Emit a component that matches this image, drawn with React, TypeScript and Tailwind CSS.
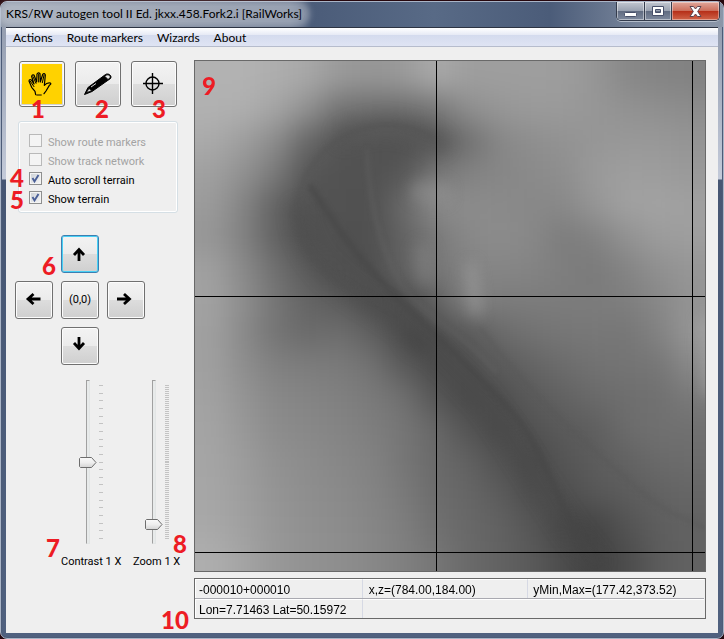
import { useState, type ReactNode } from "react";
import clsx from "clsx";

/* Terrain heights, one grey level per map cell, row by row from the north. */
const HEIGHTS: number[][] = [
  [178, 178, 174, 168, 154, 150, 154, 170, 158, 158, 158, 157, 150, 136, 132, 130],
  [177, 175, 165, 145, 115, 110, 110, 118, 142, 150, 154, 154, 150, 146, 143, 140],
  [170, 158, 140, 103, 84, 82, 80, 86, 110, 134, 142, 146, 150, 152, 152, 148],
  [160, 145, 122, 86, 82, 82, 86, 118, 130, 134, 138, 142, 154, 158, 157, 153],
  [155, 132, 98, 82, 82, 80, 105, 138, 140, 138, 136, 136, 150, 161, 162, 160],
  [150, 130, 98, 80, 80, 80, 98, 120, 136, 140, 136, 124, 130, 146, 156, 158],
  [160, 138, 112, 90, 80, 78, 98, 118, 130, 134, 132, 126, 122, 132, 144, 150],
  [162, 142, 118, 100, 92, 78, 76, 95, 130, 124, 124, 124, 124, 126, 136, 148],
  [160, 138, 116, 106, 110, 96, 74, 76, 88, 106, 114, 118, 120, 118, 130, 150],
  [160, 142, 128, 124, 122, 114, 90, 74, 78, 90, 100, 108, 114, 116, 118, 138],
  [162, 148, 136, 132, 128, 122, 112, 86, 72, 78, 90, 98, 106, 110, 112, 122],
  [164, 152, 140, 136, 132, 126, 118, 104, 84, 72, 82, 90, 94, 108, 112, 112],
  [165, 156, 145, 140, 135, 130, 118, 106, 98, 82, 72, 85, 92, 98, 106, 108],
  [166, 158, 148, 142, 138, 132, 122, 108, 102, 92, 76, 78, 88, 92, 98, 102],
  [168, 160, 150, 144, 140, 134, 126, 112, 104, 98, 86, 70, 68, 84, 94, 98],
  [174, 164, 152, 146, 142, 136, 128, 118, 106, 98, 90, 76, 66, 76, 92, 98],
];
const CELL = 32;

function Terrain() {
  const cells: ReactNode[] = [];
  for (let r = -2; r < 18; r++) {
    for (let c = -2; c < 18; c++) {
      const v = HEIGHTS[Math.min(15, Math.max(0, r))][Math.min(15, Math.max(0, c))];
      cells.push(
        <rect key={`${r}/${c}`} x={c * CELL} y={r * CELL} width={CELL + 1} height={CELL + 1} fill={`rgb(${v},${v},${v})`} />,
      );
    }
  }
  return (
    <svg viewBox="0 0 510 510" className="block h-auto w-full" role="img" aria-label="Terrain map">
      <defs>
        <filter id="slope" filterUnits="userSpaceOnUse" x="-64" y="-64" width="640" height="640" colorInterpolationFilters="sRGB">
          <feGaussianBlur stdDeviation="14" />
        </filter>
        <filter id="edge" filterUnits="userSpaceOnUse" x="-40" y="-40" width="600" height="600" colorInterpolationFilters="sRGB">
          <feGaussianBlur stdDeviation="2" />
        </filter>
        <filter id="bank" filterUnits="userSpaceOnUse" x="-40" y="-40" width="600" height="600" colorInterpolationFilters="sRGB">
          <feGaussianBlur stdDeviation="7" />
        </filter>
      </defs>
      <g filter="url(#slope)">{cells}</g>
      <g filter="url(#bank)" fill="none" strokeLinecap="round">
        <path d="M150 74 C190 58 220 66 244 82" stroke="#555" strokeWidth="20" opacity=".5" />
        <path d="M104 150 C106 195 140 222 180 245 S250 300 280 330 S350 440 400 500" stroke="#4a4a4a" strokeWidth="20" opacity=".3" />
        <path d="M276 206 L281 250" stroke="#a0a0a0" strokeWidth="10" opacity=".6" />
        <path d="M226 130 L245 132" stroke="#969696" strokeWidth="22" opacity=".4" />
        <path d="M228 190 L230 216" stroke="#888" strokeWidth="18" opacity=".4" />
        <path d="M510 262 L514 330" stroke="#b0b0b0" strokeWidth="12" opacity=".5" />
        <path d="M218 278 L226 284" stroke="#444" strokeWidth="18" opacity=".5" />
      </g>
      <g filter="url(#edge)" fill="none" strokeLinecap="round">
        <path d="M116 126 C138 160 155 188 190 224 C235 270 280 310 316 350 S362 450 400 500" stroke="#454545" strokeWidth="7" opacity=".5" />
        <path d="M238 76 C190 50 140 70 116 106 S100 180 126 204 S170 232 200 250" stroke="#505050" strokeWidth="5" opacity=".35" />
        <path d="M172 90 C174 150 190 210 220 240 S270 275 300 310" stroke="#666" strokeWidth="5" opacity=".3" />
        <path d="M286 268 C340 340 400 390 440 425 S490 455 508 466" stroke="#555" strokeWidth="4" opacity=".35" />
      </g>
      <path d="M241.500 0V510M497.500 0V510M0 235.500H510M0 491.500H510" stroke="#000" fill="none" shapeRendering="crispEdges" />
    </svg>
  );
}

const face =
  "grid place-items-center rounded-[3px] border bg-[linear-gradient(#f3f3f3,#ebebeb_49%,#dddddd_50%,#cfcfcf)]";
const plain = "border-[#707070] shadow-[inset_0_0_0_1px_#fcfcfc]";
const focused = "border-[#3c7fb1] shadow-[inset_0_0_0_1px_#48d0f5]";

function Mark({ n, className }: { n: number; className: string }) {
  return (
    <span
      className={clsx(
        "pointer-events-none absolute font-['Lato','Open_Sans',sans-serif] text-[24px] leading-[20px] font-black text-[#ed1c24]",
        className,
      )}
    >
      {n}
    </span>
  );
}

function Check({ label, initial = false, disabled = false }: { label: string; initial?: boolean; disabled?: boolean }) {
  const [on, setOn] = useState(initial);
  return (
    <label className={clsx("flex h-[19px] items-center gap-1.5", disabled ? "text-[#a3a3a3]" : "text-black")}>
      <span className="grid size-[13px] place-items-center">
        <input
          type="checkbox"
          checked={on}
          disabled={disabled}
          onChange={(e) => setOn(e.target.checked)}
          className="col-start-1 row-start-1 size-[13px] appearance-none border border-[#8e8f8f] bg-[linear-gradient(135deg,#cbd0d6,#f6f6f6)] shadow-[inset_0_0_0_1px_#f4f4f4] disabled:border-[#b9b9b9] disabled:bg-[#f4f4f4] disabled:bg-none"
        />
        {on && (
          <svg viewBox="0 0 13 13" className="pointer-events-none col-start-1 row-start-1 size-[13px]" aria-hidden="true">
            <path d="M3.500 6L5.500 9.500L9.500 3" fill="none" stroke="#4a5f97" strokeWidth="1.900" />
          </svg>
        )}
      </span>
      <span className="pt-1 leading-[13px]">{label}</span>
    </label>
  );
}

function Slider({ name, initial, ticks }: { name: string; initial: number; ticks: number }) {
  const [value, setValue] = useState(initial);
  return (
    <div className="flex gap-0.5">
      <div className="relative flex h-[164px] w-[19px] justify-center">
        <input
          type="range"
          aria-label={name}
          min={0}
          max={100}
          value={value}
          onChange={(e) => setValue(Number(e.target.value))}
          className="h-full w-[4px] appearance-none border border-[#e2e5e5] border-t-[#a0a0a0] border-l-[#a0a0a0] bg-[#e7eaea] [direction:rtl] [writing-mode:vertical-lr] [&::-webkit-slider-thumb]:h-[11px] [&::-webkit-slider-thumb]:w-[19px] [&::-webkit-slider-thumb]:appearance-none [&::-webkit-slider-thumb]:bg-transparent"
        />
        <svg
          viewBox="0 0 19 11"
          className="pointer-events-none absolute left-0 h-[11px] w-[19px]"
          style={{ bottom: `${(value / 100) * 153}px` }}
          aria-hidden="true"
        >
          <defs>
            <linearGradient id="thumb" x1="0" y1="0" x2="0" y2="1">
              <stop offset="0" stopColor="#fafafa" />
              <stop offset=".5" stopColor="#eeeeee" />
              <stop offset="1" stopColor="#d4d4d4" />
            </linearGradient>
          </defs>
          <path d="M2.500 .5H13.500L18 5.500L13.500 10.500H2.500L1.500 9.500V1.500Z" fill="url(#thumb)" stroke="#6d6d6d" />
        </svg>
      </div>
      <svg width="4" height="164" shapeRendering="crispEdges" aria-hidden="true">
        {Array.from({ length: ticks }, (_, i) => (
          <rect key={i} x="0" y={5 + Math.round((i * 153) / (ticks - 1))} width="4" height="1" fill="#c3c3c3" />
        ))}
      </svg>
    </div>
  );
}

const arrows = {
  up: "M6 14V2.500M1 8L6 2.500L11 8",
  down: "M6 -2V9.500M1 4L6 9.500L11 4",
  left: "M13.500 6H1M6.500 1L1 6L6.500 11",
  right: "M-2 6H10.500M5 1L10.500 6L5 11",
};

function Pan({ dir, active = false, className }: { dir: keyof typeof arrows; active?: boolean; className: string }) {
  return (
    <button type="button" aria-label={`Scroll ${dir}`} className={clsx(face, active ? focused : plain, "size-[38px]", className)}>
      <svg viewBox="0 0 14 14" className="size-[14px] overflow-visible" fill="none" stroke="#000" strokeWidth="2.800" aria-hidden="true">
        <path d={arrows[dir]} />
      </svg>
    </button>
  );
}

function WindowButtons() {
  const glass =
    "grid place-items-center border-r border-[#343c4d] bg-[linear-gradient(#c2c7d0,#9aa2b1_48%,#5f6a80_50%,#7f8a9e)] shadow-[inset_0_0_0_1px_rgba(255,255,255,0.45)]";
  return (
    <div className="mr-[3px] flex h-[19px] overflow-hidden rounded-b-[5px] border border-t-0 border-[#343c4d] shadow-[0_1px_0_#b4bdca]">
      <button type="button" aria-label="Minimize" className={clsx(glass, "w-[28px]")}>
        <svg width="13" height="5" className="mt-1.5" aria-hidden="true">
          <rect x=".5" y=".5" width="12" height="4" rx="1" fill="#fff" stroke="#48506a" />
        </svg>
      </button>
      <button type="button" aria-label="Maximize" className={clsx(glass, "w-[27px]")}>
        <svg width="12" height="10" aria-hidden="true">
          <path d="M.5 .5H11.500V9.500H.5ZM3.500 3.500V6.500H8.500V3.500Z" fillRule="evenodd" fill="#fff" stroke="#48506a" />
        </svg>
      </button>
      <button
        type="button"
        aria-label="Close"
        className="grid w-[47px] place-items-center bg-[linear-gradient(#e0a79b,#cc6f5c_48%,#b52d17_50%,#d0654a)] shadow-[inset_0_0_0_1px_rgba(255,255,255,0.4)]"
      >
        <svg width="13" height="11" aria-hidden="true">
          <path
            d="M1 .5H4.500L6.500 3L8.500 .5H12L8.700 5.500L12 10.500H8.500L6.500 8L4.500 10.500H1L4.300 5.500Z"
            fill="#fff"
            stroke="#5a4450"
          />
        </svg>
      </button>
    </div>
  );
}

function Hand() {
  return (
    <svg viewBox="40 40 72 72" className="size-6" fill="none" stroke="#000" strokeWidth="3.600" strokeLinejoin="round" strokeLinecap="round" aria-hidden="true">
      <path d="M63 108L61 98L51 86L43 67Q44 61 50 64L58 76L51 54Q52 47 58 49L66 70L67 46Q71 40 76 45L77 70L84 47Q89 42 92 49L89 80Q97 71 107 73Q111 76 104 80L94 97L88 105" />
      <path d="M47 68L58 84M55 54L64 74M72 47V70M88 50L83 72" strokeWidth="3" />
      <path d="M66 109H80" strokeWidth="3" />
    </svg>
  );
}

function Pencil() {
  return (
    <svg viewBox="0 0 30 24" className="h-6 w-[30px]" stroke="#000" strokeLinejoin="round" aria-hidden="true">
      <path d="M1.500 22.500L5 15.500L22.500 2.500C25 .8 29.500 3.500 27.500 6.500L9 19.500Z" fill="#000" />
      <path d="M3.500 20.500L6 16.500L8.500 18.800Z" fill="#e6e6e6" strokeWidth=".7" />
      <path d="M23 3.200C25.500 2 28 4 27 6L25 7.500L21.700 4.200Z" fill="#e8e8e8" strokeWidth=".9" />
      <path d="M8 15L13 11.500" stroke="#d8d8d8" strokeWidth="1" />
    </svg>
  );
}

function Target() {
  return (
    <svg viewBox="0 0 22 22" className="size-[22px]" fill="none" stroke="#000" strokeWidth="1.400" aria-hidden="true">
      <circle cx="9.500" cy="10.500" r="6.500" />
      <path d="M9.500 0V21M-1 10.500H20" />
    </svg>
  );
}

export default function App() {
  const cell = "flex h-[19px] items-center border-t border-l border-white px-[3px] pt-0.5 whitespace-nowrap";
  return (
    <div className="flex min-h-screen flex-col bg-[#26070d] font-['Liberation_Sans',Arial,sans-serif] text-[11px] text-black">
      <div className="mt-px flex flex-1 flex-col rounded-[7px] border border-[#a9b4c6] bg-[linear-gradient(#8c96a9,#c3cad9_177px,#465673_178px,#50617f)] px-[5px] pb-[5px] shadow-[inset_0_0_0_1px_#4c5b77]">
        <header className="-mx-[5px] flex h-[25px] items-start justify-between rounded-t-[6px] bg-[linear-gradient(90deg,#8d97a8,#7f8a9d_15%,#6b7890_40%,#4b5c79_43%,#586a86_60%,#4b5c79_76%,#77849a_88%,#8b96a8)]">
          <h1 className="mt-1 ml-0.5 rounded-full bg-white/30 px-[3px] font-['Lato','Open_Sans',sans-serif] text-[12px] leading-4 whitespace-nowrap shadow-[0_0_6px_5px_rgba(255,255,255,0.3)]">
            KRS/RW autogen tool II Ed. jkxx.458.Fork2.i [RailWorks]
          </h1>
          <WindowButtons />
        </header>

        <div className="flex flex-1 flex-col border-t border-[#2c3342] bg-[#efefef]">
          <nav className="flex h-[19px] items-center gap-3.5 border-b border-[#b6bccc] bg-[linear-gradient(#ffffff,#e6eaf5_38%,#d4dbee_40%,#dfe4f3)] px-[7px] pt-0.5 font-['Lato','Open_Sans',sans-serif] text-[12px] leading-4">
            {["Actions", "Route markers", "Wizards", "About"].map((item) => (
              <button key={item} type="button">
                {item}
              </button>
            ))}
          </nav>

          <main className="flex flex-1 items-start pr-3 pb-3.5">
            <aside className="w-[188px] shrink-0 pt-3.5 pl-[9px] font-['Roboto','Liberation_Sans',sans-serif]">
              <div className="relative ml-1 flex gap-2.5">
                <button type="button" aria-label="Scroll map" className={clsx(face, plain, "size-[46px]")}>
                  <span className="grid size-10 place-items-center bg-[#ffd200] pr-1">
                    <Hand />
                  </span>
                </button>
                <button type="button" aria-label="Draw" className={clsx(face, plain, "size-[46px]")}>
                  <Pencil />
                </button>
                <button type="button" aria-label="Pick point" className={clsx(face, plain, "size-[46px]")}>
                  <Target />
                </button>
                <Mark n={1} className="top-[38px] left-3" />
                <Mark n={2} className="top-[38px] left-[76px]" />
                <Mark n={3} className="top-[38px] left-[133px]" />
              </div>

              <fieldset className="relative mt-3.5 ml-[3px] w-[160px] rounded-[3px] border border-[#d5dfe5] pt-[9px] pb-[5px] pl-2.5 shadow-[inset_0_0_0_1px_#fff]">
                <Check label="Show route markers" disabled />
                <Check label="Show track network" disabled />
                <Check label="Auto scroll terrain" initial />
                <Check label="Show terrain" initial />
                <Mark n={4} className="top-[46px] -left-[9px]" />
                <Mark n={5} className="top-[68px] -left-[9px]" />
              </fieldset>

              <div className="relative mt-[22px] grid w-[130px] grid-cols-3 gap-2">
                <Pan dir="up" active className="col-start-2 row-start-1" />
                <Pan dir="left" className="col-start-1 row-start-2" />
                <button type="button" className={clsx(face, plain, "col-start-2 row-start-2 size-[38px]")}>
                  (0,0)
                </button>
                <Pan dir="right" className="col-start-3 row-start-2" />
                <Pan dir="down" className="col-start-2 row-start-3" />
                <Mark n={6} className="top-[21px] left-[27px]" />
              </div>

              <div className="relative mt-[15px] ml-[46px] flex gap-3">
                <div className="flex w-[60px] flex-col gap-[11px]">
                  <div className="ml-[17px]">
                    <Slider name="Contrast" initial={50} ticks={21} />
                  </div>
                  <span className="leading-[14px] whitespace-nowrap">Contrast 1 X</span>
                </div>
                <div className="flex flex-col gap-[11px]">
                  <div className="ml-[11px]">
                    <Slider name="Zoom" initial={9} ticks={78} />
                  </div>
                  <span className="leading-[14px] whitespace-nowrap">Zoom 1 X</span>
                </div>
                <Mark n={7} className="top-[158px] -left-[15px]" />
                <Mark n={8} className="top-[154px] left-[112px]" />
              </div>
            </aside>

            <section className="min-w-0 flex-1 pt-[13px]">
              <div className="relative border border-[#696969]">
                <Terrain />
                <Mark n={9} className="top-[15px] left-[7px]" />
              </div>
              <div className="relative mt-1.5 border border-[#696969] pr-px text-[12px]">
                <div className="grid grid-cols-[167fr_166fr_177fr] border-b border-[#a9a9b0]">
                  <span className={cell}>-000010+000010</span>
                  <span className={clsx(cell, "border-l-[#d6d9e4] pl-[6px]")}>x,z=(784.00,184.00)</span>
                  <span className={clsx(cell, "border-l-[#d6d9e4] pl-[5px]")}>yMin,Max=(177.42,373.52)</span>
                </div>
                <div className="grid grid-cols-[167fr_343fr]">
                  <span className={cell}>Lon=7.71463 Lat=50.15972</span>
                  <span className={clsx(cell, "border-l-[#d6d9e4]")} />
                </div>
                <Mark n={10} className="top-[31px] -left-[34px]" />
              </div>
            </section>
          </main>
        </div>
      </div>
    </div>
  );
}
